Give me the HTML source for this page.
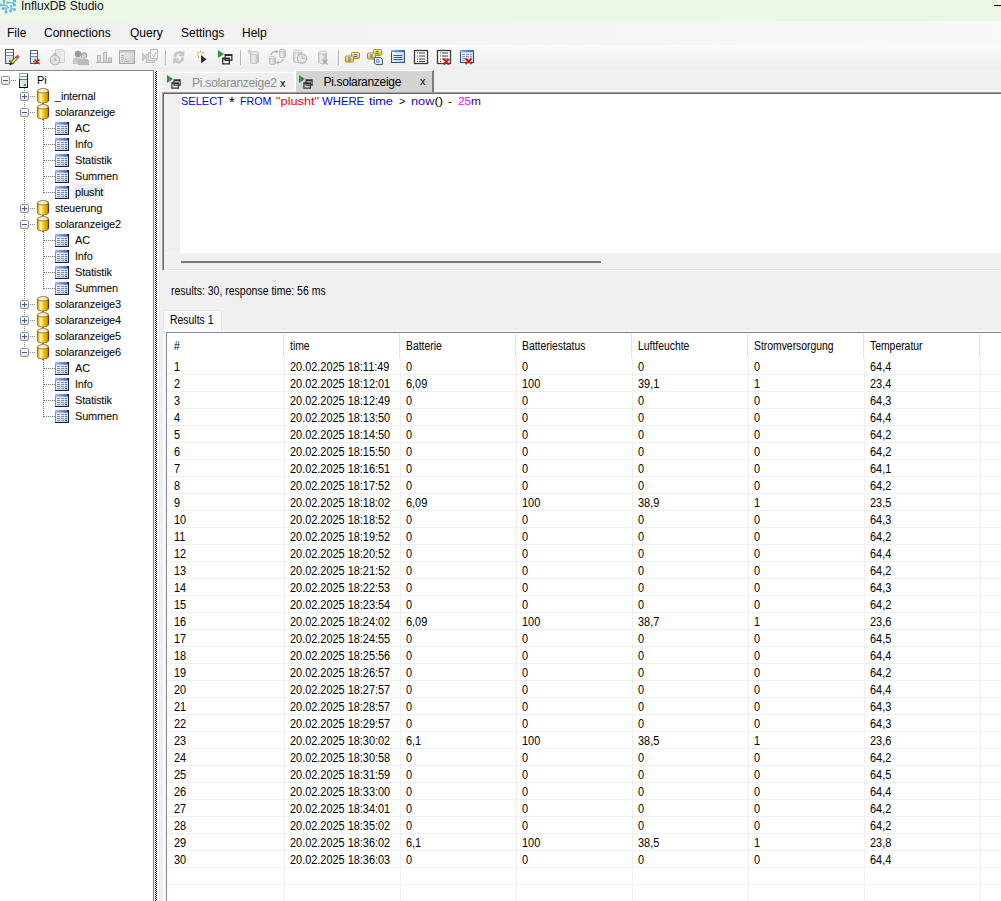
<!DOCTYPE html>
<html><head><meta charset="utf-8">
<style>
*{margin:0;padding:0;box-sizing:border-box}
html,body{width:1001px;height:901px;overflow:hidden;background:#f0f0f0;font-family:"Liberation Sans",sans-serif;color:#000}
.t{position:absolute;white-space:pre;line-height:14px}
.abs{position:absolute}
#title{left:0;top:0;width:1001px;height:21px;background:#ecf7e5}
#menu{left:0;top:21px;width:1001px;height:24px;background:linear-gradient(90deg,#f0f0f0,#f9f9f9)}
#tool{left:0;top:45px;width:1001px;height:25px;background:linear-gradient(#fbfbfb,#eeeeee)}
.mt{font-size:12px}
#tree{left:0;top:70px;width:154px;height:831px;background:#fff;border-top:1px solid #828790;border-right:1px solid #828790}
.tt{font-size:11px;letter-spacing:-0.2px}
.dh{position:absolute;height:1px;background:repeating-linear-gradient(90deg,#787878 0 1px,transparent 1px 2px)}
.dv{position:absolute;width:1px;background:repeating-linear-gradient(180deg,#787878 0 1px,transparent 1px 2px)}
.gt{font-size:12px;transform:scaleX(0.91);transform-origin:0 0}
.gh{transform:scaleX(0.865)}
#grid{left:166px;top:332px;width:835px;height:569px;background:#fff;border-left:1px solid #828790;border-top:1px solid #828790}
.hsep{position:absolute;top:334px;width:1px;height:24px;background:#e5e5e5}
.vsep{position:absolute;top:358px;height:543px;width:1px;background:#f0f0f0}
.rsep{position:absolute;left:167px;width:834px;height:1px;background:#f0f0f0}
</style></head><body>
<svg width="0" height="0" style="position:absolute">
<defs>
<linearGradient id="gbox" x1="0" y1="0" x2="0" y2="1"><stop offset="0" stop-color="#ffffff"/><stop offset="0.5" stop-color="#f4f4f4"/><stop offset="1" stop-color="#dcdcdc"/></linearGradient>
<linearGradient id="gcyl" x1="0" y1="0" x2="1" y2="0"><stop offset="0" stop-color="#d9a800"/><stop offset="0.3" stop-color="#fff6b0"/><stop offset="0.55" stop-color="#f5cc10"/><stop offset="0.85" stop-color="#d49a00"/><stop offset="1" stop-color="#a86a00"/></linearGradient>
<linearGradient id="gtop" x1="0" y1="0" x2="1" y2="0"><stop offset="0" stop-color="#f8e890"/><stop offset="0.5" stop-color="#fffbe0"/><stop offset="1" stop-color="#e8c040"/></linearGradient>
<linearGradient id="gtbar" x1="0" y1="0" x2="1" y2="0"><stop offset="0" stop-color="#9fb8f0"/><stop offset="1" stop-color="#1030e0"/></linearGradient>
<linearGradient id="gtbody" x1="0" y1="0" x2="1" y2="1"><stop offset="0" stop-color="#ffffff"/><stop offset="1" stop-color="#c8d4f0"/></linearGradient>
<symbol id="minus" viewBox="0 0 9 9"><rect x="0.5" y="0.5" width="8" height="8" rx="1.2" fill="url(#gbox)" stroke="#8e8e8e"/><rect x="2" y="4" width="5" height="1" fill="#3f5aa6"/></symbol>
<symbol id="plus" viewBox="0 0 9 9"><rect x="0.5" y="0.5" width="8" height="8" rx="1.2" fill="url(#gbox)" stroke="#8e8e8e"/><rect x="2" y="4" width="5" height="1" fill="#3f5aa6"/><rect x="4" y="2" width="1" height="5" fill="#3f5aa6"/></symbol>
<symbol id="db" viewBox="0 0 13 16"><path d="M0.5 2.8 V12.8 A5.5 2.2 0 0 0 11.5 12.8 V2.8 Z" fill="url(#gcyl)" stroke="#6b5a30" stroke-width="0.8"/><path d="M11.5 3 V12.8" stroke="#8a2a00" stroke-width="1"/><ellipse cx="6" cy="2.8" rx="5.5" ry="2.2" fill="url(#gtop)" stroke="#7a6a40" stroke-width="0.8"/><path d="M5 15.3 h2" stroke="#b03000" stroke-width="0.8"/></symbol>
<symbol id="tbl" viewBox="0 0 15 13"><rect x="0" y="0" width="14" height="13" fill="#101840"/><rect x="0" y="0" width="13" height="12" fill="url(#gtbody)"/><rect x="0" y="0" width="1" height="12" fill="#7890c8"/><rect x="0" y="0" width="13" height="2.5" fill="url(#gtbar)"/><rect x="1" y="0.5" width="11" height="0.8" fill="#c8d8ff" opacity="0.6"/><g fill="#7d8fb8"><rect x="2" y="4" width="3" height="1"/><rect x="6" y="4" width="3" height="1"/><rect x="2" y="6" width="3" height="1"/><rect x="6" y="6" width="3" height="1"/><rect x="2" y="8" width="3" height="1"/><rect x="6" y="8" width="3" height="1"/><rect x="2" y="10" width="3" height="1"/><rect x="6" y="10" width="3" height="1"/></g><g fill="#2a7aa0"><rect x="10" y="4" width="2" height="1"/><rect x="10" y="6" width="2" height="1"/><rect x="10" y="8" width="2" height="1"/><rect x="10" y="10" width="2" height="1" fill="#1a2aa0"/></g></symbol>
<symbol id="server" viewBox="0 0 10 16"><rect x="0" y="0" width="9" height="15" fill="#0a1a80"/><rect x="0" y="14" width="9" height="1" fill="#000"/><rect x="0" y="0" width="9" height="1" fill="#9aa8c8"/><rect x="0" y="0" width="1" height="6" fill="#9aa8c8"/><rect x="1" y="1" width="7" height="2" fill="#ffffff"/><rect x="1" y="3" width="7" height="1" fill="#8090b0"/><rect x="1" y="4" width="7" height="2" fill="#f4f6ff"/><rect x="1" y="6" width="7" height="1" fill="#5080a0"/><rect x="1" y="7" width="7" height="7" fill="#d8e0f8"/><rect x="1" y="7" width="1" height="7" fill="#ffffff"/><rect x="5" y="11" width="2" height="2" fill="#10c010"/></symbol>
</defs></svg>
<div id="title" class="abs"></div>
<svg class="abs" style="left:0;top:0" width="18" height="14" viewBox="0 0 18 14"><g stroke="#72c2e0" stroke-width="1.6" stroke-linecap="round" fill="none"><path d="M0 5 L6.5 5.5 M4 0 V4.5 M7.5 2.5 L13 3 L15 5 M14.5 0 V2 M6.5 5.5 L8.5 7.5 M3 8.5 L8.5 7.8 M6 8.5 V12 M11 6 L11.5 8.5 L14.5 9.5 M11.5 8.5 L10.5 11"/></g><g fill="#6ab8da"><circle cx="1" cy="5" r="1.5"/><circle cx="4" cy="1" r="1.4"/><circle cx="14.5" cy="1" r="1.5"/><circle cx="14.5" cy="5" r="1.5"/><circle cx="3" cy="8.5" r="1.6"/><circle cx="6" cy="12" r="1.6"/><circle cx="10.5" cy="10.8" r="1.6"/><circle cx="14.5" cy="9.5" r="1.6"/><circle cx="7.5" cy="2.5" r="1.2"/><circle cx="11.3" cy="6" r="1.1"/></g></svg>
<div class="t mt" style="left:21px;top:-1px;;font-size:12px;color:#111">InfluxDB Studio</div>
<div class="abs" style="left:994px;top:5px;width:7px;height:1px;background:#000"></div>
<div id="menu" class="abs"></div>
<div class="t mt" style="left:7px;top:26px;">File</div><div class="t mt" style="left:44px;top:26px;">Connections</div><div class="t mt" style="left:130px;top:26px;">Query</div><div class="t mt" style="left:181px;top:26px;">Settings</div><div class="t mt" style="left:242px;top:26px;">Help</div>
<div id="tool" class="abs"></div>
<svg class="abs" style="left:0;top:45px" width="500" height="25" viewBox="0 45 500 25">
<defs>
<linearGradient id="gsrv" x1="0" y1="0" x2="1" y2="1"><stop offset="0" stop-color="#ffffff"/><stop offset="1" stop-color="#b8c4e0"/></linearGradient>
<linearGradient id="ggray" x1="0" y1="0" x2="1" y2="1"><stop offset="0" stop-color="#f4f4f4"/><stop offset="1" stop-color="#c8c8c8"/></linearGradient>
<linearGradient id="gcylg" x1="0" y1="0" x2="1" y2="0"><stop offset="0" stop-color="#c8c8c8"/><stop offset="0.35" stop-color="#f0f0f0"/><stop offset="1" stop-color="#b8b8b8"/></linearGradient>
<linearGradient id="gyel" x1="0" y1="0" x2="0" y2="1"><stop offset="0" stop-color="#fff4b8"/><stop offset="1" stop-color="#e0b030"/></linearGradient>
<linearGradient id="gwin" x1="0" y1="0" x2="1" y2="1"><stop offset="0" stop-color="#ffffff"/><stop offset="1" stop-color="#c0d0f0"/></linearGradient>
<linearGradient id="gbar" x1="0" y1="0" x2="1" y2="0"><stop offset="0" stop-color="#8aa8ee"/><stop offset="1" stop-color="#3060d8"/></linearGradient>
</defs>
<!-- 1 server + pencil -->
<rect x="5.5" y="49.5" width="8" height="14" fill="url(#gsrv)" stroke="#4a5a78"/>
<rect x="6" y="50" width="7" height="2" fill="#fff"/><rect x="6" y="52" width="7" height="1" fill="#7888a8"/>
<rect x="6" y="53" width="7" height="2" fill="#f8f8ff"/><rect x="6" y="55" width="7" height="1" fill="#7888a8"/>
<rect x="9" y="60" width="2" height="2" fill="#20d020"/>
<path d="M11 63.5 L17 57.5" stroke="#5a4a10" stroke-width="3.2" stroke-linecap="butt"/>
<path d="M11 63.5 L17 57.5" stroke="#f0d060" stroke-width="1.8"/>
<path d="M16.3 58.2 L18.6 55.9" stroke="#c05050" stroke-width="3.2"/>
<path d="M10 65 L11.8 62.8" stroke="#101010" stroke-width="1.6"/>
<!-- 2 server + X -->
<rect x="30.5" y="50.5" width="7" height="13" fill="url(#gsrv)" stroke="#4a5a78"/>
<rect x="31" y="51" width="6" height="2" fill="#fff"/><rect x="31" y="53" width="6" height="1" fill="#7888a8"/>
<rect x="31" y="54" width="6" height="2" fill="#f8f8ff"/><rect x="31" y="56" width="6" height="1" fill="#7888a8"/>
<rect x="33" y="61" width="2" height="1.5" fill="#20d020"/>
<path d="M34.5 59.5 L39.5 64 M39.5 59.5 L34.5 64" stroke="#e01010" stroke-width="1.6"/>
<!-- 3 stopwatch + doc (gray) -->
<path d="M55.5 49.5 H62.5 L64.5 51.5 V62.5 H55.5 Z" fill="#ececec" stroke="#d4d4d4"/>
<circle cx="55" cy="60" r="4.8" fill="#e4e4e4" stroke="#b8b8b8" stroke-width="1.2"/>
<rect x="54" y="53.5" width="2" height="1.5" fill="#b8b8b8"/><rect x="53" y="53" width="4" height="1" fill="#c4c4c4"/>
<path d="M55 57.5 V60.5 H57" stroke="#a8a8a8" stroke-width="1" fill="none"/>
<!-- 4 people (gray) -->
<circle cx="78" cy="54" r="3.2" fill="#9a9a9a"/>
<path d="M73 64 V60 Q73 57.5 76 57.5 H80 Q82 57.5 82 60 V64 Z" fill="#c8c8c8"/>
<circle cx="84" cy="55.5" r="3.2" fill="#a8a8a8"/>
<path d="M78 65 V61.5 Q78 59 81 59 H87 Q89 59 89 61.5 V65 Z" fill="#bcbcbc"/>
<circle cx="84" cy="56" r="2.2" fill="#d0d0d0"/>
<!-- 5 bar chart -->
<rect x="96" y="62" width="16" height="1" fill="#b0b0b0"/>
<rect x="97.5" y="55.5" width="3" height="6.5" fill="#d8d8d8" stroke="#b8b8b8"/>
<rect x="103.5" y="52.5" width="3" height="9.5" fill="#d8d8d8" stroke="#b8b8b8"/>
<rect x="108.5" y="58" width="3" height="4" fill="#d8d8d8" stroke="#b8b8b8"/>
<!-- 6 window gray -->
<rect x="119.5" y="50.5" width="15" height="13" fill="url(#ggray)" stroke="#a8a8a8"/>
<rect x="120" y="51" width="14" height="2" fill="#cfcfcf"/>
<g fill="#b4b4b4"><rect x="121" y="55" width="3" height="1"/><rect x="121" y="57" width="3" height="1"/><rect x="125" y="57" width="1" height="1"/><rect x="121" y="59" width="3" height="1"/><rect x="125" y="59" width="2" height="1"/><rect x="121" y="61" width="2" height="1"/><rect x="124" y="61" width="5" height="1"/></g>
<!-- 7 forward + docs gray -->
<path d="M142 52 L147 57 L142 62 Z" fill="#c8c8c8"/>
<rect x="146.5" y="54.5" width="8" height="8" fill="#e6e6e6" stroke="#bdbdbd"/>
<rect x="148.5" y="52.5" width="8" height="8" fill="#ececec" stroke="#bdbdbd"/>
<rect x="150.5" y="49.5" width="7" height="9" fill="#f2f2f2" stroke="#bdbdbd"/>
<path d="M152 55 L154 57 L156 52" stroke="#c0c0c0" fill="none"/>
<!-- sep -->
<rect x="165" y="50" width="1" height="15" fill="#b4b4b4"/><rect x="166" y="50" width="1" height="15" fill="#ffffff"/>
<!-- 8 refresh gray -->
<path d="M175 57.5 A4.3 4.3 0 0 1 182 53.5" stroke="#c6c6c6" stroke-width="2.8" fill="none"/>
<path d="M184.3 50.2 V56.3 H178.2 Z" fill="#c6c6c6"/>
<path d="M182.5 57 A4.3 4.3 0 0 1 175.5 61" stroke="#c6c6c6" stroke-width="2.8" fill="none"/>
<path d="M173.2 64.3 V58.2 H179.3 Z" fill="#c6c6c6"/>
<!-- 9 sparkle + play -->
<g fill="#e08a10"><rect x="200" y="51" width="1" height="1.5"/><rect x="197.5" y="52" width="1.2" height="1.2"/><rect x="202.5" y="52" width="1.2" height="1.2"/><rect x="197" y="54.5" width="1.5" height="1"/><rect x="198" y="56.5" width="1.2" height="1.2"/></g>
<path d="M201 55 L206.5 59.2 L201 63.5 Z" fill="#303030"/>
<!-- 10 green triangle + windows -->
<path d="M218 50 L224 54 L218 58 Z" fill="#2a9a2a"/>
<path fill-rule="evenodd" fill="#303030" d="M224.5 54 H232.5 V61 H224.5 Z M225.8 56 H231.2 V59.8 H225.8 Z"/>
<path fill-rule="evenodd" fill="#303030" d="M222 57.5 H230 V64.5 H222 Z M223.3 59.5 H228.7 V63.2 H223.3 Z"/>
<!-- sep -->
<rect x="240" y="50" width="1" height="15" fill="#b4b4b4"/><rect x="241" y="50" width="1" height="15" fill="#ffffff"/>
<!-- 11 db sparkle gray -->
<path d="M250.5 53 V62 A4 1.5 0 0 0 258.5 62 V53 Z" fill="url(#gcylg)" stroke="#c0c0c0"/>
<ellipse cx="254.5" cy="53" rx="4" ry="1.5" fill="#f0f0f0" stroke="#c0c0c0"/>
<g stroke="#c8c8c8" stroke-width="0.8"><path d="M249.5 49 V54 M247 51.5 H252 M247.8 49.8 L251.2 53.2 M251.2 49.8 L247.8 53.2"/></g>
<!-- 12 db transfer gray -->
<path d="M269.5 57.5 V63.5 A3 1.2 0 0 0 275.5 63.5 V57.5 Z" fill="url(#gcylg)" stroke="#c0c0c0"/>
<ellipse cx="272.5" cy="57.5" rx="3" ry="1.2" fill="#f0f0f0" stroke="#c0c0c0"/>
<path d="M279.5 50.5 V56.5 A3 1.2 0 0 0 285.5 56.5 V50.5 Z" fill="url(#gcylg)" stroke="#c0c0c0"/>
<ellipse cx="282.5" cy="50.5" rx="3" ry="1.2" fill="#f0f0f0" stroke="#c0c0c0"/>
<path d="M271 55 Q272 51.5 276 51.5" stroke="#b0b0b0" stroke-width="1.3" fill="none"/><path d="M276 49.5 L278.5 51.5 L276 53.5Z" fill="#b0b0b0"/>
<path d="M283 59 Q282.5 62.5 278 62.5" stroke="#b0b0b0" stroke-width="1.3" fill="none"/><path d="M278.5 60.5 L276 62.5 L278.5 64.5Z" fill="#b0b0b0"/>
<!-- 13 db clock gray -->
<path d="M293.5 51.5 V61 A4 1.5 0 0 0 301.5 61 V51.5 Z" fill="url(#gcylg)" stroke="#c4c4c4"/>
<ellipse cx="297.5" cy="51.5" rx="4" ry="1.5" fill="#f0f0f0" stroke="#c4c4c4"/>
<circle cx="302" cy="58.5" r="4.6" fill="#e8e8e8" stroke="#b4b4b4" stroke-width="1.2"/>
<path d="M302 55.5 V58.5 H304.5" stroke="#a8a8a8" fill="none"/>
<!-- 14 db x gray -->
<path d="M318.5 52.5 V62 A4 1.5 0 0 0 326.5 62 V52.5 Z" fill="url(#gcylg)" stroke="#c4c4c4"/>
<ellipse cx="322.5" cy="52.5" rx="4" ry="1.5" fill="#f0f0f0" stroke="#c4c4c4"/>
<path d="M322.5 59.5 L327.5 64.5 M327.5 59.5 L322.5 64.5" stroke="#a8a8a8" stroke-width="1.2"/>
<!-- sep -->
<rect x="338" y="50" width="1" height="15" fill="#b4b4b4"/><rect x="339" y="50" width="1" height="15" fill="#ffffff"/>
<!-- 15 yellow tables -->
<rect x="351.5" y="52.5" width="8" height="6" rx="1" fill="url(#gyel)" stroke="#a88a30"/>
<rect x="354" y="54" width="3" height="1" fill="#4a6aa0"/><rect x="354" y="56" width="3" height="1" fill="#4a6aa0"/>
<rect x="345.5" y="56" width="8" height="6" rx="1" fill="url(#gyel)" stroke="#a88a30"/>
<rect x="348" y="57.5" width="3" height="1" fill="#4a6aa0"/><rect x="348" y="59.5" width="3" height="1" fill="#4a6aa0"/>
<!-- 16 yellow tables + doc -->
<rect x="373.5" y="49.5" width="8" height="6" rx="1" fill="url(#gyel)" stroke="#a88a30"/>
<rect x="376" y="51" width="3" height="1" fill="#4a6aa0"/><rect x="376" y="53" width="3" height="1" fill="#4a6aa0"/>
<rect x="367.5" y="53" width="8" height="6" rx="1" fill="url(#gyel)" stroke="#a88a30"/>
<rect x="370" y="54.5" width="3" height="1" fill="#4a6aa0"/><rect x="370" y="56.5" width="3" height="1" fill="#4a6aa0"/>
<path d="M374.5 57.5 H380.5 L382.5 59.5 V64.5 H376 L374.5 63 Z" fill="#e8eef8" stroke="#4a5a78"/>
<rect x="376" y="59.5" width="3" height="1" fill="#3a6ac8"/><rect x="376" y="61.5" width="4" height="1" fill="#3a6ac8"/>
<!-- 17 blue window -->
<rect x="391.5" y="50.5" width="13" height="12" fill="url(#gwin)" stroke="#3a4a70"/>
<rect x="391" y="50" width="14" height="2.2" fill="url(#gbar)"/>
<rect x="393.5" y="55" width="9" height="1" fill="#2a5ad0"/><rect x="393.5" y="57" width="9" height="1" fill="#2a5ad0"/><rect x="393.5" y="59" width="9" height="1" fill="#2a5ad0"/>
<!-- 18 list -->
<rect x="414.5" y="50.5" width="13" height="13" fill="#fff" stroke="#3a3a3a" stroke-width="1.3"/>
<g fill="#3a3a3a"><rect x="417" y="52.5" width="1" height="1"/><rect x="419" y="52.5" width="6" height="1"/><rect x="417" y="55.5" width="1" height="1"/><rect x="419" y="55.5" width="6" height="1"/><rect x="417" y="58.5" width="1" height="1"/><rect x="419" y="58.5" width="6" height="1"/><rect x="417" y="61" width="1" height="1"/><rect x="419" y="61" width="6" height="1"/></g>
<!-- 19 list + x -->
<rect x="437.5" y="50.5" width="13" height="13" fill="#fff" stroke="#3a3a3a" stroke-width="1.3"/>
<g fill="#3a3a3a"><rect x="440" y="52.5" width="1" height="1"/><rect x="442" y="52.5" width="6" height="1"/><rect x="440" y="55.5" width="1" height="1"/><rect x="442" y="55.5" width="6" height="1"/><rect x="440" y="58.5" width="1" height="1"/><rect x="442" y="58.5" width="6" height="1"/><rect x="440" y="61" width="1" height="1"/></g>
<path d="M443.5 59 L449 64.5 M449 59 L443.5 64.5" stroke="#e01010" stroke-width="1.8"/>
<!-- 20 table + x -->
<rect x="460.5" y="50.5" width="13" height="12" fill="url(#gwin)" stroke="#3a4a70"/>
<rect x="460" y="50" width="14" height="2.2" fill="url(#gbar)"/>
<g fill="#8aa0c8"><rect x="462" y="54" width="3" height="1"/><rect x="466" y="54" width="3" height="1"/><rect x="470" y="54" width="2" height="1"/><rect x="462" y="56" width="3" height="1"/><rect x="466" y="56" width="3" height="1"/><rect x="470" y="56" width="2" height="1"/><rect x="462" y="58" width="3" height="1"/><rect x="462" y="60" width="3" height="1"/></g>
<path d="M465.5 58.5 L471.5 64 M471.5 58.5 L465.5 64" stroke="#e01010" stroke-width="1.8"/>
</svg>

<div id="tree" class="abs"></div>
<div class="dv" style="left:24px;top:88px;height:259px"></div>
<div class="dv" style="left:43px;top:120px;height:73px"></div>
<div class="dv" style="left:43px;top:232px;height:57px"></div>
<div class="dv" style="left:43px;top:360px;height:57px"></div>
<svg class="abs" style="left:1px;top:76px" width="9" height="9"><use href="#minus"/></svg>
<div class="dh" style="left:11px;top:80px;width:6px"></div>
<svg class="abs" style="left:19px;top:73px" width="10" height="16"><use href="#server"/></svg>
<div class="t tt" style="left:37px;top:73px;">Pi</div>
<svg class="abs" style="left:20px;top:92px" width="9" height="9"><use href="#plus"/></svg>
<div class="dh" style="left:30px;top:96px;width:6px"></div>
<svg class="abs" style="left:37px;top:88px" width="13" height="16"><use href="#db"/></svg>
<div class="t tt" style="left:55px;top:89px;">_internal</div>
<svg class="abs" style="left:20px;top:108px" width="9" height="9"><use href="#minus"/></svg>
<div class="dh" style="left:30px;top:112px;width:6px"></div>
<svg class="abs" style="left:37px;top:104px" width="13" height="16"><use href="#db"/></svg>
<div class="t tt" style="left:55px;top:105px;">solaranzeige</div>
<div class="dh" style="left:44px;top:128px;width:11px"></div>
<svg class="abs" style="left:55px;top:122px" width="15" height="13"><use href="#tbl"/></svg>
<div class="t tt" style="left:75px;top:121px;">AC</div>
<div class="dh" style="left:44px;top:144px;width:11px"></div>
<svg class="abs" style="left:55px;top:138px" width="15" height="13"><use href="#tbl"/></svg>
<div class="t tt" style="left:75px;top:137px;">Info</div>
<div class="dh" style="left:44px;top:160px;width:11px"></div>
<svg class="abs" style="left:55px;top:154px" width="15" height="13"><use href="#tbl"/></svg>
<div class="t tt" style="left:75px;top:153px;">Statistik</div>
<div class="dh" style="left:44px;top:176px;width:11px"></div>
<svg class="abs" style="left:55px;top:170px" width="15" height="13"><use href="#tbl"/></svg>
<div class="t tt" style="left:75px;top:169px;">Summen</div>
<div class="dh" style="left:44px;top:192px;width:11px"></div>
<svg class="abs" style="left:55px;top:186px" width="15" height="13"><use href="#tbl"/></svg>
<div class="abs" style="left:73px;top:184px;width:32px;height:16px;background:#eeeeee"></div>
<div class="t tt" style="left:75px;top:185px;">plusht</div>
<svg class="abs" style="left:20px;top:204px" width="9" height="9"><use href="#plus"/></svg>
<div class="dh" style="left:30px;top:208px;width:6px"></div>
<svg class="abs" style="left:37px;top:200px" width="13" height="16"><use href="#db"/></svg>
<div class="t tt" style="left:55px;top:201px;">steuerung</div>
<svg class="abs" style="left:20px;top:220px" width="9" height="9"><use href="#minus"/></svg>
<div class="dh" style="left:30px;top:224px;width:6px"></div>
<svg class="abs" style="left:37px;top:216px" width="13" height="16"><use href="#db"/></svg>
<div class="t tt" style="left:55px;top:217px;">solaranzeige2</div>
<div class="dh" style="left:44px;top:240px;width:11px"></div>
<svg class="abs" style="left:55px;top:234px" width="15" height="13"><use href="#tbl"/></svg>
<div class="t tt" style="left:75px;top:233px;">AC</div>
<div class="dh" style="left:44px;top:256px;width:11px"></div>
<svg class="abs" style="left:55px;top:250px" width="15" height="13"><use href="#tbl"/></svg>
<div class="t tt" style="left:75px;top:249px;">Info</div>
<div class="dh" style="left:44px;top:272px;width:11px"></div>
<svg class="abs" style="left:55px;top:266px" width="15" height="13"><use href="#tbl"/></svg>
<div class="t tt" style="left:75px;top:265px;">Statistik</div>
<div class="dh" style="left:44px;top:288px;width:11px"></div>
<svg class="abs" style="left:55px;top:282px" width="15" height="13"><use href="#tbl"/></svg>
<div class="t tt" style="left:75px;top:281px;">Summen</div>
<svg class="abs" style="left:20px;top:300px" width="9" height="9"><use href="#plus"/></svg>
<div class="dh" style="left:30px;top:304px;width:6px"></div>
<svg class="abs" style="left:37px;top:296px" width="13" height="16"><use href="#db"/></svg>
<div class="t tt" style="left:55px;top:297px;">solaranzeige3</div>
<svg class="abs" style="left:20px;top:316px" width="9" height="9"><use href="#plus"/></svg>
<div class="dh" style="left:30px;top:320px;width:6px"></div>
<svg class="abs" style="left:37px;top:312px" width="13" height="16"><use href="#db"/></svg>
<div class="t tt" style="left:55px;top:313px;">solaranzeige4</div>
<svg class="abs" style="left:20px;top:332px" width="9" height="9"><use href="#plus"/></svg>
<div class="dh" style="left:30px;top:336px;width:6px"></div>
<svg class="abs" style="left:37px;top:328px" width="13" height="16"><use href="#db"/></svg>
<div class="t tt" style="left:55px;top:329px;">solaranzeige5</div>
<svg class="abs" style="left:20px;top:348px" width="9" height="9"><use href="#minus"/></svg>
<div class="dh" style="left:30px;top:352px;width:6px"></div>
<svg class="abs" style="left:37px;top:344px" width="13" height="16"><use href="#db"/></svg>
<div class="t tt" style="left:55px;top:345px;">solaranzeige6</div>
<div class="dh" style="left:44px;top:368px;width:11px"></div>
<svg class="abs" style="left:55px;top:362px" width="15" height="13"><use href="#tbl"/></svg>
<div class="t tt" style="left:75px;top:361px;">AC</div>
<div class="dh" style="left:44px;top:384px;width:11px"></div>
<svg class="abs" style="left:55px;top:378px" width="15" height="13"><use href="#tbl"/></svg>
<div class="t tt" style="left:75px;top:377px;">Info</div>
<div class="dh" style="left:44px;top:400px;width:11px"></div>
<svg class="abs" style="left:55px;top:394px" width="15" height="13"><use href="#tbl"/></svg>
<div class="t tt" style="left:75px;top:393px;">Statistik</div>
<div class="dh" style="left:44px;top:416px;width:11px"></div>
<svg class="abs" style="left:55px;top:410px" width="15" height="13"><use href="#tbl"/></svg>
<div class="t tt" style="left:75px;top:409px;">Summen</div>
<div class="abs" style="left:155px;top:71px;width:2px;height:830px;background:repeating-conic-gradient(#000 0 25%,#fff 0 50%) 0 0/2px 2px"></div>
<div class="abs" style="left:159px;top:90px;width:842px;height:1px;background:#ffffff"></div>
<div class="abs" style="left:161px;top:72px;width:134px;height:18px;background:#efefef;border-top:1px solid #fff;border-left:1px solid #fff;border-right:1px solid #fff"></div>
<div class="abs" style="left:295px;top:70px;width:139px;height:22px;background:#d4d4d4;border-top:1px solid #fff;border-left:1px solid #fff;border-right:2px solid #7c7c7c"></div>
<svg class="abs" style="left:166px;top:74px" width="16" height="16" viewBox="0 0 16 16"><path d="M1 1 L7 5 L1 9 Z" fill="#2a962a"/><path fill-rule="evenodd" fill="#333" d="M7.5 5.3 H14.7 V11.8 H7.5 Z M8.7 7.2 H13.5 V10.6 H8.7 Z"/><path fill-rule="evenodd" fill="#333" d="M5.3 8.3 H13 V14.8 H5.3 Z M6.5 10.1 H11.8 V13.6 H6.5 Z"/></svg>
<svg class="abs" style="left:298px;top:74px" width="16" height="16" viewBox="0 0 16 16"><path d="M1 1 L7 5 L1 9 Z" fill="#2a962a"/><path fill-rule="evenodd" fill="#333" d="M7.5 5.3 H14.7 V11.8 H7.5 Z M8.7 7.2 H13.5 V10.6 H8.7 Z"/><path fill-rule="evenodd" fill="#333" d="M5.3 8.3 H13 V14.8 H5.3 Z M6.5 10.1 H11.8 V13.6 H6.5 Z"/></svg>
<div class="t " style="left:192px;top:76px;font-size:12px;letter-spacing:-0.25px;color:#8c8c8c">Pi.solaranzeige2</div>
<div class="t " style="left:280px;top:76px;font-size:11px">x</div>
<div class="t " style="left:323.5px;top:74.5px;font-size:12px;letter-spacing:-0.3px;color:#000">Pi.solaranzeige</div>
<div class="t " style="left:420px;top:74px;font-size:11px">x</div>
<div class="abs" style="left:157px;top:71px;width:2px;height:830px;background:#fff"></div>
<div class="abs" style="left:159px;top:91px;width:1px;height:810px;background:#e8e8e8"></div>
<div class="abs" style="left:162px;top:92px;width:839px;height:179px;border-top:1px solid #a0a0a0;border-left:1px solid #a0a0a0;border-bottom:1px solid #fff;background:#fff"></div>
<div class="abs" style="left:163px;top:93px;width:838px;height:177px;border-top:1px solid #696969;border-left:1px solid #696969;background:#fff"></div>
<div class="abs" style="left:164px;top:94px;width:16px;height:159px;background:#f0f0f0"></div>
<div class="abs" style="left:164px;top:253px;width:837px;height:17px;background:#f0f0f0;border-top:1px solid #f8f8f8;border-bottom:1px solid #e4e4e4"></div>
<div class="abs" style="left:181px;top:261px;width:420px;height:2px;background:#787878"></div>
<div class="t " style="left:181px;top:94px;font-size:11px;color:#0000ff;transform:scaleX(1.0);transform-origin:0 0">SELECT</div>
<div class="t " style="left:229px;top:95px;font-size:15px;color:#000;transform:scaleX(1.0);transform-origin:0 0">*</div>
<div class="t " style="left:240px;top:94px;font-size:11px;color:#0000ff;transform:scaleX(0.97);transform-origin:0 0">FROM</div>
<div class="t " style="left:276px;top:94px;font-size:11px;color:#ff0000;transform:scaleX(1.16);transform-origin:0 0">"plusht"</div>
<div class="t " style="left:322px;top:94px;font-size:11px;color:#0000ff;transform:scaleX(1.03);transform-origin:0 0">WHERE</div>
<div class="t " style="left:369px;top:94px;font-size:11px;color:#0000ff;transform:scaleX(1.15);transform-origin:0 0">time</div>
<div class="t " style="left:399px;top:94px;font-size:11px;color:#000;transform:scaleX(1.0);transform-origin:0 0">&gt;</div>
<div class="t " style="left:411px;top:94px;font-size:11px;color:#000;transform:scaleX(1.16);transform-origin:0 0"><span style="color:#2800c8">now</span>()</div>
<div class="t " style="left:448px;top:94px;font-size:11px;color:#000;transform:scaleX(1.0);transform-origin:0 0">-</div>
<div class="t " style="left:457.5px;top:94px;font-size:11px;color:#ff00ff;transform:scaleX(1.08);transform-origin:0 0">25</div>
<div class="t " style="left:470.5px;top:94px;font-size:11px;color:#2800c8;transform:scaleX(1.08);transform-origin:0 0">m</div>
<div class="t " style="left:171px;top:284px;font-size:12px;transform:scaleX(0.875);transform-origin:0 0">results: 30, response time: 56 ms</div>
<div class="abs" style="left:163px;top:331px;width:838px;height:570px;background:#f8f8f8;border-top:1px solid #fff"></div>
<div class="abs" style="left:163px;top:310px;width:59px;height:21px;border:1px solid #e6e6e6;border-bottom:none;background:#f9f9f9"></div>
<div class="t " style="left:170px;top:313px;font-size:12px;transform:scaleX(0.87);transform-origin:0 0">Results 1</div>
<div id="grid" class="abs"></div>
<div class="hsep" style="left:283px"></div>
<div class="hsep" style="left:399px"></div>
<div class="hsep" style="left:515px"></div>
<div class="hsep" style="left:631px"></div>
<div class="hsep" style="left:747px"></div>
<div class="hsep" style="left:863px"></div>
<div class="hsep" style="left:979px"></div>
<div class="t gt gh" style="left:174px;top:339px;">#</div>
<div class="t gt gh" style="left:290px;top:339px;">time</div>
<div class="t gt gh" style="left:406px;top:339px;">Batterie</div>
<div class="t gt gh" style="left:522px;top:339px;">Batteriestatus</div>
<div class="t gt gh" style="left:638px;top:339px;">Luftfeuchte</div>
<div class="t gt gh" style="left:754px;top:339px;">Stromversorgung</div>
<div class="t gt gh" style="left:870px;top:339px;">Temperatur</div>
<div class="vsep" style="left:284px"></div>
<div class="vsep" style="left:400px"></div>
<div class="vsep" style="left:516px"></div>
<div class="vsep" style="left:632px"></div>
<div class="vsep" style="left:748px"></div>
<div class="vsep" style="left:864px"></div>
<div class="vsep" style="left:980px"></div>
<div class="rsep" style="top:374px"></div>
<div class="rsep" style="top:391px"></div>
<div class="rsep" style="top:408px"></div>
<div class="rsep" style="top:425px"></div>
<div class="rsep" style="top:442px"></div>
<div class="rsep" style="top:459px"></div>
<div class="rsep" style="top:476px"></div>
<div class="rsep" style="top:493px"></div>
<div class="rsep" style="top:510px"></div>
<div class="rsep" style="top:527px"></div>
<div class="rsep" style="top:544px"></div>
<div class="rsep" style="top:561px"></div>
<div class="rsep" style="top:578px"></div>
<div class="rsep" style="top:595px"></div>
<div class="rsep" style="top:612px"></div>
<div class="rsep" style="top:629px"></div>
<div class="rsep" style="top:646px"></div>
<div class="rsep" style="top:663px"></div>
<div class="rsep" style="top:680px"></div>
<div class="rsep" style="top:697px"></div>
<div class="rsep" style="top:714px"></div>
<div class="rsep" style="top:731px"></div>
<div class="rsep" style="top:748px"></div>
<div class="rsep" style="top:765px"></div>
<div class="rsep" style="top:782px"></div>
<div class="rsep" style="top:799px"></div>
<div class="rsep" style="top:816px"></div>
<div class="rsep" style="top:833px"></div>
<div class="rsep" style="top:850px"></div>
<div class="rsep" style="top:867px"></div>
<div class="rsep" style="top:884px"></div>
<div class="t gt" style="left:174px;top:360px;">1</div>
<div class="t gt" style="left:290px;top:360px;">20.02.2025 18:11:49</div>
<div class="t gt" style="left:406px;top:360px;">0</div>
<div class="t gt" style="left:522px;top:360px;">0</div>
<div class="t gt" style="left:638px;top:360px;">0</div>
<div class="t gt" style="left:754px;top:360px;">0</div>
<div class="t gt" style="left:870px;top:360px;">64,4</div>
<div class="t gt" style="left:174px;top:377px;">2</div>
<div class="t gt" style="left:290px;top:377px;">20.02.2025 18:12:01</div>
<div class="t gt" style="left:406px;top:377px;">6,09</div>
<div class="t gt" style="left:522px;top:377px;">100</div>
<div class="t gt" style="left:638px;top:377px;">39,1</div>
<div class="t gt" style="left:754px;top:377px;">1</div>
<div class="t gt" style="left:870px;top:377px;">23,4</div>
<div class="t gt" style="left:174px;top:394px;">3</div>
<div class="t gt" style="left:290px;top:394px;">20.02.2025 18:12:49</div>
<div class="t gt" style="left:406px;top:394px;">0</div>
<div class="t gt" style="left:522px;top:394px;">0</div>
<div class="t gt" style="left:638px;top:394px;">0</div>
<div class="t gt" style="left:754px;top:394px;">0</div>
<div class="t gt" style="left:870px;top:394px;">64,3</div>
<div class="t gt" style="left:174px;top:411px;">4</div>
<div class="t gt" style="left:290px;top:411px;">20.02.2025 18:13:50</div>
<div class="t gt" style="left:406px;top:411px;">0</div>
<div class="t gt" style="left:522px;top:411px;">0</div>
<div class="t gt" style="left:638px;top:411px;">0</div>
<div class="t gt" style="left:754px;top:411px;">0</div>
<div class="t gt" style="left:870px;top:411px;">64,4</div>
<div class="t gt" style="left:174px;top:428px;">5</div>
<div class="t gt" style="left:290px;top:428px;">20.02.2025 18:14:50</div>
<div class="t gt" style="left:406px;top:428px;">0</div>
<div class="t gt" style="left:522px;top:428px;">0</div>
<div class="t gt" style="left:638px;top:428px;">0</div>
<div class="t gt" style="left:754px;top:428px;">0</div>
<div class="t gt" style="left:870px;top:428px;">64,2</div>
<div class="t gt" style="left:174px;top:445px;">6</div>
<div class="t gt" style="left:290px;top:445px;">20.02.2025 18:15:50</div>
<div class="t gt" style="left:406px;top:445px;">0</div>
<div class="t gt" style="left:522px;top:445px;">0</div>
<div class="t gt" style="left:638px;top:445px;">0</div>
<div class="t gt" style="left:754px;top:445px;">0</div>
<div class="t gt" style="left:870px;top:445px;">64,2</div>
<div class="t gt" style="left:174px;top:462px;">7</div>
<div class="t gt" style="left:290px;top:462px;">20.02.2025 18:16:51</div>
<div class="t gt" style="left:406px;top:462px;">0</div>
<div class="t gt" style="left:522px;top:462px;">0</div>
<div class="t gt" style="left:638px;top:462px;">0</div>
<div class="t gt" style="left:754px;top:462px;">0</div>
<div class="t gt" style="left:870px;top:462px;">64,1</div>
<div class="t gt" style="left:174px;top:479px;">8</div>
<div class="t gt" style="left:290px;top:479px;">20.02.2025 18:17:52</div>
<div class="t gt" style="left:406px;top:479px;">0</div>
<div class="t gt" style="left:522px;top:479px;">0</div>
<div class="t gt" style="left:638px;top:479px;">0</div>
<div class="t gt" style="left:754px;top:479px;">0</div>
<div class="t gt" style="left:870px;top:479px;">64,2</div>
<div class="t gt" style="left:174px;top:496px;">9</div>
<div class="t gt" style="left:290px;top:496px;">20.02.2025 18:18:02</div>
<div class="t gt" style="left:406px;top:496px;">6,09</div>
<div class="t gt" style="left:522px;top:496px;">100</div>
<div class="t gt" style="left:638px;top:496px;">38,9</div>
<div class="t gt" style="left:754px;top:496px;">1</div>
<div class="t gt" style="left:870px;top:496px;">23,5</div>
<div class="t gt" style="left:174px;top:513px;">10</div>
<div class="t gt" style="left:290px;top:513px;">20.02.2025 18:18:52</div>
<div class="t gt" style="left:406px;top:513px;">0</div>
<div class="t gt" style="left:522px;top:513px;">0</div>
<div class="t gt" style="left:638px;top:513px;">0</div>
<div class="t gt" style="left:754px;top:513px;">0</div>
<div class="t gt" style="left:870px;top:513px;">64,3</div>
<div class="t gt" style="left:174px;top:530px;">11</div>
<div class="t gt" style="left:290px;top:530px;">20.02.2025 18:19:52</div>
<div class="t gt" style="left:406px;top:530px;">0</div>
<div class="t gt" style="left:522px;top:530px;">0</div>
<div class="t gt" style="left:638px;top:530px;">0</div>
<div class="t gt" style="left:754px;top:530px;">0</div>
<div class="t gt" style="left:870px;top:530px;">64,2</div>
<div class="t gt" style="left:174px;top:547px;">12</div>
<div class="t gt" style="left:290px;top:547px;">20.02.2025 18:20:52</div>
<div class="t gt" style="left:406px;top:547px;">0</div>
<div class="t gt" style="left:522px;top:547px;">0</div>
<div class="t gt" style="left:638px;top:547px;">0</div>
<div class="t gt" style="left:754px;top:547px;">0</div>
<div class="t gt" style="left:870px;top:547px;">64,4</div>
<div class="t gt" style="left:174px;top:564px;">13</div>
<div class="t gt" style="left:290px;top:564px;">20.02.2025 18:21:52</div>
<div class="t gt" style="left:406px;top:564px;">0</div>
<div class="t gt" style="left:522px;top:564px;">0</div>
<div class="t gt" style="left:638px;top:564px;">0</div>
<div class="t gt" style="left:754px;top:564px;">0</div>
<div class="t gt" style="left:870px;top:564px;">64,2</div>
<div class="t gt" style="left:174px;top:581px;">14</div>
<div class="t gt" style="left:290px;top:581px;">20.02.2025 18:22:53</div>
<div class="t gt" style="left:406px;top:581px;">0</div>
<div class="t gt" style="left:522px;top:581px;">0</div>
<div class="t gt" style="left:638px;top:581px;">0</div>
<div class="t gt" style="left:754px;top:581px;">0</div>
<div class="t gt" style="left:870px;top:581px;">64,3</div>
<div class="t gt" style="left:174px;top:598px;">15</div>
<div class="t gt" style="left:290px;top:598px;">20.02.2025 18:23:54</div>
<div class="t gt" style="left:406px;top:598px;">0</div>
<div class="t gt" style="left:522px;top:598px;">0</div>
<div class="t gt" style="left:638px;top:598px;">0</div>
<div class="t gt" style="left:754px;top:598px;">0</div>
<div class="t gt" style="left:870px;top:598px;">64,2</div>
<div class="t gt" style="left:174px;top:615px;">16</div>
<div class="t gt" style="left:290px;top:615px;">20.02.2025 18:24:02</div>
<div class="t gt" style="left:406px;top:615px;">6,09</div>
<div class="t gt" style="left:522px;top:615px;">100</div>
<div class="t gt" style="left:638px;top:615px;">38,7</div>
<div class="t gt" style="left:754px;top:615px;">1</div>
<div class="t gt" style="left:870px;top:615px;">23,6</div>
<div class="t gt" style="left:174px;top:632px;">17</div>
<div class="t gt" style="left:290px;top:632px;">20.02.2025 18:24:55</div>
<div class="t gt" style="left:406px;top:632px;">0</div>
<div class="t gt" style="left:522px;top:632px;">0</div>
<div class="t gt" style="left:638px;top:632px;">0</div>
<div class="t gt" style="left:754px;top:632px;">0</div>
<div class="t gt" style="left:870px;top:632px;">64,5</div>
<div class="t gt" style="left:174px;top:649px;">18</div>
<div class="t gt" style="left:290px;top:649px;">20.02.2025 18:25:56</div>
<div class="t gt" style="left:406px;top:649px;">0</div>
<div class="t gt" style="left:522px;top:649px;">0</div>
<div class="t gt" style="left:638px;top:649px;">0</div>
<div class="t gt" style="left:754px;top:649px;">0</div>
<div class="t gt" style="left:870px;top:649px;">64,4</div>
<div class="t gt" style="left:174px;top:666px;">19</div>
<div class="t gt" style="left:290px;top:666px;">20.02.2025 18:26:57</div>
<div class="t gt" style="left:406px;top:666px;">0</div>
<div class="t gt" style="left:522px;top:666px;">0</div>
<div class="t gt" style="left:638px;top:666px;">0</div>
<div class="t gt" style="left:754px;top:666px;">0</div>
<div class="t gt" style="left:870px;top:666px;">64,2</div>
<div class="t gt" style="left:174px;top:683px;">20</div>
<div class="t gt" style="left:290px;top:683px;">20.02.2025 18:27:57</div>
<div class="t gt" style="left:406px;top:683px;">0</div>
<div class="t gt" style="left:522px;top:683px;">0</div>
<div class="t gt" style="left:638px;top:683px;">0</div>
<div class="t gt" style="left:754px;top:683px;">0</div>
<div class="t gt" style="left:870px;top:683px;">64,4</div>
<div class="t gt" style="left:174px;top:700px;">21</div>
<div class="t gt" style="left:290px;top:700px;">20.02.2025 18:28:57</div>
<div class="t gt" style="left:406px;top:700px;">0</div>
<div class="t gt" style="left:522px;top:700px;">0</div>
<div class="t gt" style="left:638px;top:700px;">0</div>
<div class="t gt" style="left:754px;top:700px;">0</div>
<div class="t gt" style="left:870px;top:700px;">64,3</div>
<div class="t gt" style="left:174px;top:717px;">22</div>
<div class="t gt" style="left:290px;top:717px;">20.02.2025 18:29:57</div>
<div class="t gt" style="left:406px;top:717px;">0</div>
<div class="t gt" style="left:522px;top:717px;">0</div>
<div class="t gt" style="left:638px;top:717px;">0</div>
<div class="t gt" style="left:754px;top:717px;">0</div>
<div class="t gt" style="left:870px;top:717px;">64,3</div>
<div class="t gt" style="left:174px;top:734px;">23</div>
<div class="t gt" style="left:290px;top:734px;">20.02.2025 18:30:02</div>
<div class="t gt" style="left:406px;top:734px;">6,1</div>
<div class="t gt" style="left:522px;top:734px;">100</div>
<div class="t gt" style="left:638px;top:734px;">38,5</div>
<div class="t gt" style="left:754px;top:734px;">1</div>
<div class="t gt" style="left:870px;top:734px;">23,6</div>
<div class="t gt" style="left:174px;top:751px;">24</div>
<div class="t gt" style="left:290px;top:751px;">20.02.2025 18:30:58</div>
<div class="t gt" style="left:406px;top:751px;">0</div>
<div class="t gt" style="left:522px;top:751px;">0</div>
<div class="t gt" style="left:638px;top:751px;">0</div>
<div class="t gt" style="left:754px;top:751px;">0</div>
<div class="t gt" style="left:870px;top:751px;">64,2</div>
<div class="t gt" style="left:174px;top:768px;">25</div>
<div class="t gt" style="left:290px;top:768px;">20.02.2025 18:31:59</div>
<div class="t gt" style="left:406px;top:768px;">0</div>
<div class="t gt" style="left:522px;top:768px;">0</div>
<div class="t gt" style="left:638px;top:768px;">0</div>
<div class="t gt" style="left:754px;top:768px;">0</div>
<div class="t gt" style="left:870px;top:768px;">64,5</div>
<div class="t gt" style="left:174px;top:785px;">26</div>
<div class="t gt" style="left:290px;top:785px;">20.02.2025 18:33:00</div>
<div class="t gt" style="left:406px;top:785px;">0</div>
<div class="t gt" style="left:522px;top:785px;">0</div>
<div class="t gt" style="left:638px;top:785px;">0</div>
<div class="t gt" style="left:754px;top:785px;">0</div>
<div class="t gt" style="left:870px;top:785px;">64,4</div>
<div class="t gt" style="left:174px;top:802px;">27</div>
<div class="t gt" style="left:290px;top:802px;">20.02.2025 18:34:01</div>
<div class="t gt" style="left:406px;top:802px;">0</div>
<div class="t gt" style="left:522px;top:802px;">0</div>
<div class="t gt" style="left:638px;top:802px;">0</div>
<div class="t gt" style="left:754px;top:802px;">0</div>
<div class="t gt" style="left:870px;top:802px;">64,2</div>
<div class="t gt" style="left:174px;top:819px;">28</div>
<div class="t gt" style="left:290px;top:819px;">20.02.2025 18:35:02</div>
<div class="t gt" style="left:406px;top:819px;">0</div>
<div class="t gt" style="left:522px;top:819px;">0</div>
<div class="t gt" style="left:638px;top:819px;">0</div>
<div class="t gt" style="left:754px;top:819px;">0</div>
<div class="t gt" style="left:870px;top:819px;">64,2</div>
<div class="t gt" style="left:174px;top:836px;">29</div>
<div class="t gt" style="left:290px;top:836px;">20.02.2025 18:36:02</div>
<div class="t gt" style="left:406px;top:836px;">6,1</div>
<div class="t gt" style="left:522px;top:836px;">100</div>
<div class="t gt" style="left:638px;top:836px;">38,5</div>
<div class="t gt" style="left:754px;top:836px;">1</div>
<div class="t gt" style="left:870px;top:836px;">23,8</div>
<div class="t gt" style="left:174px;top:853px;">30</div>
<div class="t gt" style="left:290px;top:853px;">20.02.2025 18:36:03</div>
<div class="t gt" style="left:406px;top:853px;">0</div>
<div class="t gt" style="left:522px;top:853px;">0</div>
<div class="t gt" style="left:638px;top:853px;">0</div>
<div class="t gt" style="left:754px;top:853px;">0</div>
<div class="t gt" style="left:870px;top:853px;">64,4</div>
</body></html>
